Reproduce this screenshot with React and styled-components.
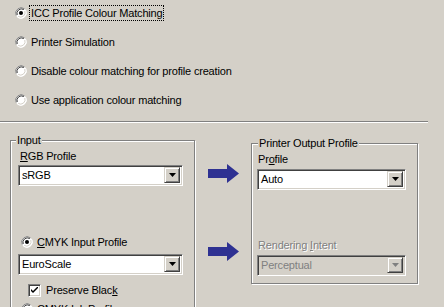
import React from "react";
import styled, { createGlobalStyle } from "styled-components";

const Global = createGlobalStyle`
  html, body {
    margin: 0;
    background: #d4d0c8;
    font-family: "Liberation Sans", Arial, sans-serif;
    font-size: 11px;
    letter-spacing: -0.18px;
    color: #000;
    overflow: hidden;
  }
`;

const Page = styled.div`
  width: 444px;
  height: 307px;
  overflow: hidden;
`;

const RadioList = styled.div`
  display: flex;
  flex-direction: column;
  gap: 9px;
  padding: 3px 0 0 15px;
`;

const RadioRow = styled.div`
  display: flex;
  align-items: center;
  height: 20px;
  gap: 3px;
`;

const Label = styled.span`
  display: inline-block;
  line-height: 14px;
  padding: 0 1px;
  outline: ${(p) => (p.$focus ? "1px dotted #000" : "none")};
  outline-offset: 0;
  color: ${(p) => (p.$disabled ? "#808080" : "#000")};
  text-shadow: ${(p) => (p.$disabled ? "1px 1px 0 #fff" : "none")};
  white-space: nowrap;
`;

const Separator = styled.div`
  width: 428px;
  height: 1px;
  margin-top: 11px;
  background: #808080;
  border-bottom: 1px solid #fff;
`;

const Lower = styled.div`
  display: flex;
  align-items: flex-start;
  padding-left: 10px;
`;

const Group = styled.div`
  position: relative;
  box-sizing: border-box;
  width: ${(p) => p.$w}px;
  height: ${(p) => p.$h}px;
  margin-top: ${(p) => p.$top}px;
  border: 1px solid #808080;
  box-shadow: inset 1px 1px 0 #fff, 1px 1px 0 #fff;
  padding: ${(p) => p.$pad};
  display: flex;
  flex-direction: column;
`;

const Legend = styled.span`
  position: absolute;
  top: -8px;
  left: ${(p) => p.$left}px;
  padding: 0 1px;
  line-height: 14px;
  background: #d4d0c8;
`;

const FieldLabel = styled(Label)`
  margin-left: ${(p) => p.$ml || 0}px;
`;

const Combo = styled.div`
  box-sizing: border-box;
  width: ${(p) => p.$w}px;
  height: 21px;
  display: flex;
  align-items: stretch;
  border: 1px solid;
  border-color: #808080 #fff #fff #808080;
  box-shadow: inset 1px 1px 0 #404040, inset -1px -1px 0 #d4d0c8;
  padding: 1px 2px 2px 1px;
  background: ${(p) => (p.$disabled ? "#d4d0c8" : "#fff")};
  margin-top: ${(p) => p.$mt || 0}px;
`;

const ComboText = styled.span`
  flex: 1;
  padding-left: 2px;
  line-height: 17px;
  color: ${(p) => (p.$disabled ? "#808080" : "#000")};
`;

const DropButton = styled.div`
  box-sizing: border-box;
  width: 16px;
  background: #d4d0c8;
  border: 1px solid;
  border-color: #d4d0c8 #404040 #404040 #d4d0c8;
  box-shadow: inset 1px 1px 0 #fff, inset -1px -1px 0 #808080;
  display: flex;
  align-items: center;
  justify-content: center;
`;

const Arrows = styled.div`
  width: 56px;
  display: flex;
  flex-direction: column;
  padding-left: 13px;
  box-sizing: border-box;
`;

const ArrowSlot = styled.div`
  margin-top: ${(p) => p.$mt}px;
  height: 19px;
`;

const CheckRow = styled.div`
  display: flex;
  align-items: center;
  gap: 4px;
  margin-left: 10px;
  margin-top: ${(p) => p.$mt || 0}px;
`;

const Box = styled.div`
  box-sizing: border-box;
  width: 13px;
  height: 13px;
  border: 1px solid;
  border-color: #808080 #fff #fff #808080;
  box-shadow: inset 1px 1px 0 #404040, inset -1px -1px 0 #d4d0c8;
  background: #fff;
  display: flex;
  align-items: center;
  justify-content: center;
`;

function RadioIcon({ on }) {
  return (
    <svg width="12" height="12" viewBox="0 0 12 12">
      <circle cx="6" cy="6" r="5.5" fill="#fff" />
      <path d="M1.2 8.5A5.5 5.5 0 0 1 9.5 1.8" fill="none" stroke="#808080" strokeWidth="1" />
      <path d="M2.2 8A4.5 4.5 0 0 1 8.8 2.6" fill="none" stroke="#404040" strokeWidth="1" />
      <path d="M10.8 3.5A5.5 5.5 0 0 1 2.5 10.2" fill="none" stroke="#fff" strokeWidth="1" />
      <path d="M9.8 4A4.5 4.5 0 0 1 3.2 9.4" fill="none" stroke="#d4d0c8" strokeWidth="1" />
      {on && <circle cx="6" cy="6" r="2" fill="#000" />}
    </svg>
  );
}

function Radio({ on, children, focus }) {
  return (
    <RadioRow>
      <RadioIcon on={on} />
      <Label $focus={focus}>{children}</Label>
    </RadioRow>
  );
}

function Select({ value, w, disabled, mt }) {
  return (
    <Combo $w={w} $disabled={disabled} $mt={mt}>
      <ComboText $disabled={disabled}>{value}</ComboText>
      <DropButton>
        <svg width="7" height="4" viewBox="0 0 7 4">
          <path d="M0 0h7L3.5 4z" fill={disabled ? "#808080" : "#000"} />
        </svg>
      </DropButton>
    </Combo>
  );
}

function Arrow() {
  return (
    <svg width="31" height="19" viewBox="0 0 31 19">
      <path d="M0 5h19V0l12 9.5L19 19v-5H0z" fill="#2e3192" />
    </svg>
  );
}

const InnerRadio = styled(RadioList)`
  padding: ${(p) => p.$top}px 0 0 3px;
`;

export default function App() {
  return (
    <Page>
      <Global />
      <RadioList>
        <Radio on focus>ICC Profile Colour Matching</Radio>
        <Radio>Printer Simulation</Radio>
        <Radio>Disable colour matching for profile creation</Radio>
        <Radio>Use application colour matching</Radio>
      </RadioList>
      <Separator />
      <Lower>
        <Group $w={185} $h={190} $top={17} $pad="8px 0 0 7px">
          <Legend $left={5}>Input</Legend>
          <FieldLabel $ml={1}>
            <u>R</u>GB Profile
          </FieldLabel>
          <Select value="sRGB" w={165} mt={2} />
          <InnerRadio $top={46}>
            <Radio on>
              <u>C</u>MYK Input Profile
            </Radio>
          </InnerRadio>
          <Select value="EuroScale" w={165} mt={2} />
          <CheckRow $mt={8}>
            <Box>
              <svg width="7" height="7" viewBox="0 0 7 7">
                <path d="M0 2l2 2l5-5v2l-5 5l-2-2z" fill="#000" />
              </svg>
            </Box>
            <Label>
              Preserve Blac<u>k</u>
            </Label>
          </CheckRow>
          <InnerRadio $top={2}>
            <Radio>CMYK Ink Profile</Radio>
          </InnerRadio>
        </Group>
        <Arrows>
          <ArrowSlot $mt={41}>
            <Arrow />
          </ArrowSlot>
          <ArrowSlot $mt={59}>
            <Arrow />
          </ArrowSlot>
        </Arrows>
        <Group $w={167} $h={141} $top={20} $pad="8px 0 0 5px">
          <Legend $left={6}>Printer Output Profile</Legend>
          <FieldLabel>
            Pr<u>o</u>file
          </FieldLabel>
          <Select value="Auto" w={149} mt={3} />
          <FieldLabel $disabled style={{ marginTop: 48 }}>
            Rendering <u>I</u>ntent
          </FieldLabel>
          <Select value="Perceptual" w={149} mt={3} disabled />
        </Group>
      </Lower>
    </Page>
  );
}
